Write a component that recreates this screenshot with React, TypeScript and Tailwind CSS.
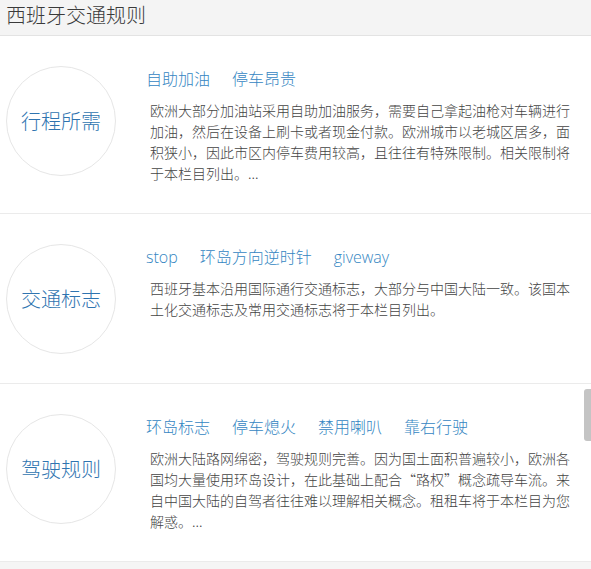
const sections = [
    {
        title: "行程所需",
        tags: ["自助加油", "停车昂贵"],
        text: "欧洲大部分加油站采用自助加油服务，需要自己拿起油枪对车辆进行加油，然后在设备上刷卡或者现金付款。欧洲城市以老城区居多，面积狭小，因此市区内停车费用较高，且往往有特殊限制。相关限制将于本栏目列出。...",
    },
    {
        title: "交通标志",
        tags: ["stop", "环岛方向逆时针", "giveway"],
        text: "西班牙基本沿用国际通行交通标志，大部分与中国大陆一致。该国本土化交通标志及常用交通标志将于本栏目列出。",
    },
    {
        title: "驾驶规则",
        tags: ["环岛标志", "停车熄火", "禁用喇叭", "靠右行驶"],
        text: "欧洲大陆路网绵密，驾驶规则完善。因为国土面积普遍较小，欧洲各国均大量使用环岛设计，在此基础上配合“路权”概念疏导车流。来自中国大陆的自驾者往往难以理解相关概念。租租车将于本栏目为您解惑。...",
    },
];

export default function App() {
    return (
        <div className="min-h-screen bg-[#f5f5f5] relative font-['Noto_Sans_CJK_SC','Noto_Sans',sans-serif]">
            <header className="h-[36px] bg-[#f4f4f4] border-b border-[#e3e3e3] px-[6px]">
                <h1 className="text-[20px] leading-[30px] font-light text-[#3a3a3a]">西班牙交通规则</h1>
            </header>

            {sections.map((s) => (
                <section
                    key={s.title}
                    className="flex items-start bg-white border-b border-[#ebebeb] pl-[6px] pt-[30px] pb-[29px]"
                >
                    <div className="w-[110px] h-[110px] shrink-0 rounded-full border border-[#e6e6e6] flex items-center justify-center">
                        <span className="text-[20px] font-light text-[#2f74b0]">{s.title}</span>
                    </div>
                    <div className="ml-[30px] pt-[3px]">
                        <div className="flex gap-[22px] text-[16px] leading-[20px] font-light text-[#3486c2] font-['Open_Sans','Noto_Sans_CJK_SC',sans-serif]">
                            {s.tags.map((t) => (
                                <span key={t}>{t}</span>
                            ))}
                        </div>
                        <p className="mt-[11px] ml-[4px] w-[424px] text-[14px] leading-[21px] font-light text-[#444]">
                            {s.text}
                        </p>
                    </div>
                </section>
            ))}

            {/* scroll thumb */}
            <div className="fixed right-0 top-[389px] w-[7px] h-[52px] rounded-l-[3px] bg-[#c4c4c4]" />
        </div>
    );
}
